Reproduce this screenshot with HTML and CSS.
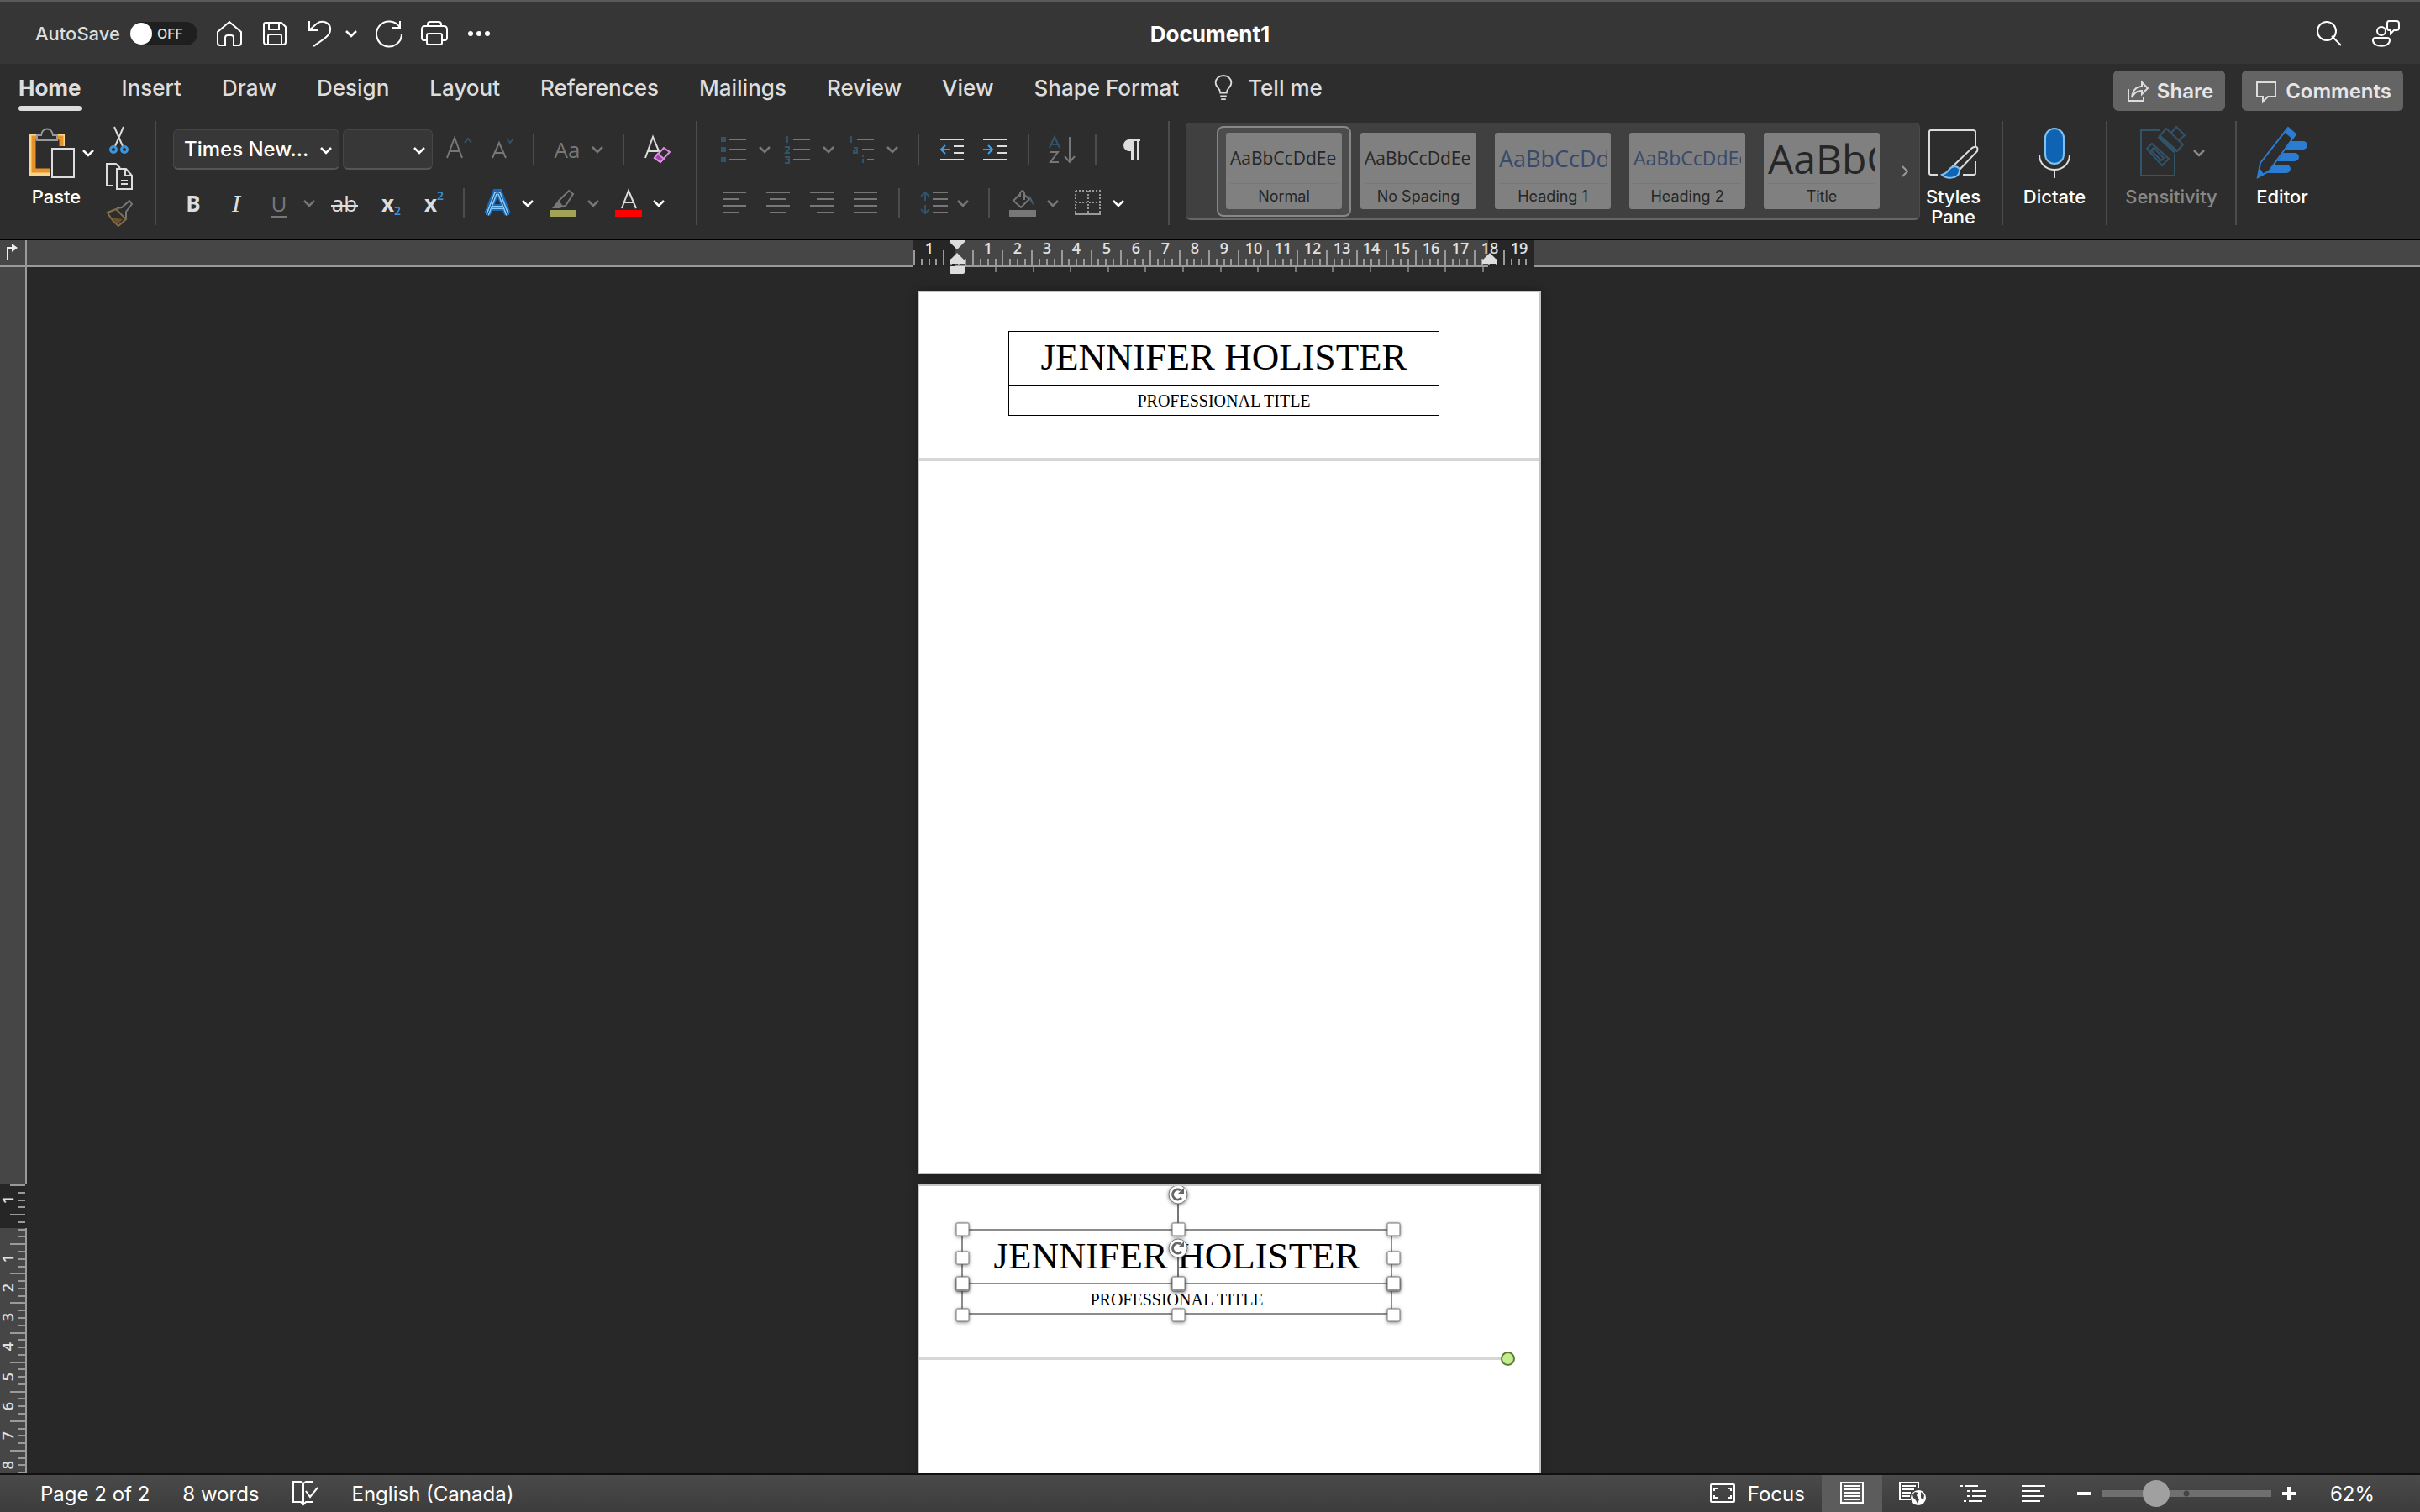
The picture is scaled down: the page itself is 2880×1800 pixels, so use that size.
FILE: index.html
```
<!DOCTYPE html>
<html lang="en">

<head>
    <meta charset="UTF-8">
    <meta name="viewport" content="width=device-width, initial-scale=1.0">
    <title>Document1</title>
    <link rel="stylesheet" href="styles.css">
</head>

<body>
    <svg class="defs" aria-hidden="true">
        <symbol id="chevron" viewBox="0 0 14 14">
            <path d="M1 4 L7 10 L13 4" fill="none" stroke="currentColor" stroke-width="2.5" />
        </symbol>
    </svg>

    <header class="titlebar">
        <div class="quick">
            <label class="autosave">
                AutoSave
                <input type="checkbox" class="autosave-input">
                <span class="switch"><span class="knob"></span>OFF</span>
            </label>
            <button class="qbtn" aria-label="Home">
                <svg class="i32" viewBox="0 0 32 32"><path d="M2 14 L16 2 L30 14 V27 Q30 30 27 30 H21 V21 Q21 18 18 18 H14 Q11 18 11 21 V30 H5 Q2 30 2 27 Z" /></svg>
            </button>
            <button class="qbtn" aria-label="Save">
                <svg class="i32" viewBox="0 0 32 32"><path d="M5 3 H24 L29 8 V26 Q29 29 26 29 H6 Q3 29 3 26 V5 Q3 3 5 3 Z M9 3 V11 H21 V3 M8 29 V19 Q8 17 10 17 H22 Q24 17 24 19 V29" /></svg>
            </button>
            <div class="undo">
                <button class="qbtn" aria-label="Undo">
                    <svg class="i32" viewBox="0 0 32 32"><path d="M3 1 V12 H14 M3 12 L12 4 C19 -1 29 3 28 12 C28 18 20 23 8 31" /></svg>
                </button>
                <button aria-label="Undo list"><svg class="chev"><use href="#chevron" /></svg></button>
            </div>
            <button class="qbtn" aria-label="Redo">
                <svg class="i32" viewBox="0 0 32 32"><path d="M29 1 V9 H20 M29 9 A15 15 0 1 0 31 16" /></svg>
            </button>
            <button class="qbtn" aria-label="Print">
                <svg class="i32" viewBox="0 0 32 32"><path d="M8 7 V5 Q8 2 11 2 H21 Q24 2 24 5 V7 M7 24 H4 Q1 24 1 21 V11 Q1 7 5 7 H27 Q31 7 31 11 V21 Q31 24 28 24 H25 M9 16 H23 Q25 16 25 18 V27 Q25 29 23 29 H9 Q7 29 7 27 V18 Q7 16 9 16 Z" /></svg>
            </button>
            <button class="qbtn" aria-label="More">
                <svg class="i32" viewBox="0 0 32 32"><g fill="#fff" stroke="none"><circle cx="5" cy="16" r="3" /><circle cx="15" cy="16" r="3" /><circle cx="25" cy="16" r="3" /></g></svg>
            </button>
        </div>
        <h1 class="doc-title">Document1</h1>
        <div class="title-right">
            <button class="qbtn" aria-label="Search">
                <svg class="i32" viewBox="0 0 32 32"><path d="M19 19 L30 30" /><circle cx="13" cy="13" r="11" /></svg>
            </button>
            <button class="qbtn" aria-label="Presence">
                <svg class="i32" viewBox="0 0 32 32"><circle cx="10" cy="13" r="5" /><path d="M3 21 H17 Q20 21 20 24 C20 33 0 33 0 24 Q0 21 3 21 Z M19 1 H28 Q31 1 31 4 V9 Q31 12 28 12 H25 L21 16 V12 H19 Q17 12 17 9 V4 Q17 1 19 1 Z" /></svg>
            </button>
        </div>
    </header>

    <nav class="tabs">
        <button class="tab active">Home</button>
        <button class="tab">Insert</button>
        <button class="tab">Draw</button>
        <button class="tab">Design</button>
        <button class="tab">Layout</button>
        <button class="tab">References</button>
        <button class="tab">Mailings</button>
        <button class="tab">Review</button>
        <button class="tab">View</button>
        <button class="tab">Shape Format</button>
        <button class="tab tell">
            <svg class="bulb" viewBox="0 0 24 32"><path d="M8 23 C8 17 2 16 2 10 A10 9 0 0 1 22 10 C22 16 16 17 16 23 Z M8 27 H16 M9 31 H15" /></svg>
            Tell me
        </button>
        <div class="tab-actions">
            <button class="pill">
                <svg viewBox="0 0 26 26"><path d="M2 10 V24 H20 V19 M6 20 C7 12 11 7 18 7 V2 L25 9 L18 16 V12 C13 12 9 14 6 20 Z" /></svg>
                Share
            </button>
            <button class="pill">
                <svg viewBox="0 0 26 26"><path d="M2 2 H24 V19 H15 L9 25 V19 H2 Z" /></svg>
                Comments
            </button>
        </div>
    </nav>

    <section class="ribbon">
        <div class="group clipboard">
            <button class="big paste">
                <span class="big-icon">
                    <svg width="54" height="60" viewBox="0 0 54 60">
                        <path d="M40 22 V10 H2 V55 H24" fill="none" stroke="#fbd58c" stroke-width="4" />
                        <path d="M38 22 V12 H5 V51 H24" fill="none" stroke="#e8922a" stroke-width="5" />
                        <path d="M9 15 V9 H14 C15 -1 27 -1 28 9 H33 V15 Z" fill="#2d2d2d" stroke="#999" stroke-width="2" />
                        <rect x="27" y="25" width="26" height="34" fill="#2d2d2d" stroke="#ddd" stroke-width="2" />
                    </svg>
                    <svg class="chev"><use href="#chevron" /></svg>
                </span>
                Paste
            </button>
            <div class="clip-tools">
                <button aria-label="Cut">
                    <svg class="i32" viewBox="0 0 32 32"><path d="M10 1 L20 24 M21 1 L11 24" stroke="#ddd" /><g stroke="#3b96dd" stroke-width="3"><circle cx="9" cy="28" r="3.5" /><circle cx="22" cy="28" r="3.5" /></g></svg>
                </button>
                <button aria-label="Copy">
                    <svg class="i32" viewBox="0 0 32 32"><path d="M9 27 H1 V1 H12 L17 6 M13 7 H24 L31 15 V31 H13 Z M23 7 V15 H31 M18 21 H26 M18 25 H26" stroke="#ddd" /></svg>
                </button>
                <button aria-label="Format painter" disabled>
                    <svg class="i32" viewBox="0 0 32 32"><path d="M2 15 L12 11 L24 23 L15 31 C10 27 5 21 2 15 Z" stroke="#7f7145" /><path d="M7 21 L20 23 L14 29 Z" fill="#6f5130" stroke="none" /><path d="M13 10 L19 9 L28 1 L31 5 L24 14 L24 22" stroke="#777" /></svg>
                </button>
            </div>
        </div>
        <div class="divider"></div>

        <div class="group rows font-group">
            <div class="row row-top">
                <div class="fonts">
                    <div class="selects">
                        <span class="select-box name-box">
                            <select aria-label="Font"><option>Times New...</option></select>
                            <svg class="chev"><use href="#chevron" /></svg>
                        </span>
                        <span class="select-box size-box">
                            <select aria-label="Font size"><option></option></select>
                            <svg class="chev"><use href="#chevron" /></svg>
                        </span>
                    </div>
                    <button class="off" aria-label="Grow font">
                        <svg class="i32" viewBox="0 0 32 32"><path d="M1 26 L10 2 L19 26 M4 18 H16" /><path d="M22 8 L26 3 L30 8" stroke="#31546b" /></svg>
                    </button>
                    <button class="off" aria-label="Shrink font">
                        <svg class="i32" viewBox="0 0 32 32"><path d="M7 26 L15 8 L23 26 M10 20 H20" /><path d="M24 3 L28 8 L32 3" stroke="#31546b" /></svg>
                    </button>
                </div>
                <i class="sep"></i>
                <div class="split off">
                    <button class="case" aria-label="Change case">Aa</button>
                    <button aria-label="Case list"><svg class="chev"><use href="#chevron" /></svg></button>
                </div>
                <i class="sep"></i>
                <button aria-label="Clear formatting">
                    <svg class="i32" viewBox="0 0 32 32"><path d="M2 26 L11 1 L19 20 M5 18 H17" /><path d="M13 26 L24 14 L31 19 L20 31 Z" stroke="#d98fe0" /><path d="M13 26 L17 21 L24 27 L20 31 Z" fill="#a03fae" stroke="#d98fe0" /></svg>
                </button>
            </div>
            <div class="row row-bottom">
                <button class="glyph"><b>B</b></button>
                <button class="glyph italic">I</button>
                <div class="split off">
                    <button class="glyph under">U</button>
                    <button aria-label="Underline list"><svg class="chev"><use href="#chevron" /></svg></button>
                </div>
                <button class="glyph strike">ab</button>
                <button class="glyph script"><b>x</b><sub>2</sub></button>
                <button class="glyph script"><b>x</b><sup>2</sup></button>
                <i class="sep"></i>
                <div class="split">
                    <button aria-label="Text effects">
                        <svg class="i32" viewBox="0 0 32 32"><path d="M4 29 L14 3 H18 L28 29 M9 21 H23" stroke="#1569b8" stroke-width="8" /><path d="M4 30 L14 4 H18 L28 30 M9 21 H23" stroke="#8cc8f5" stroke-width="4" /><path d="M4 30 L14 4 H18 L28 30 M9 21 H23" stroke="#164a7c" stroke-width="1" /></svg>
                    </button>
                    <button aria-label="Effects list"><svg class="chev"><use href="#chevron" /></svg></button>
                </div>
                <div class="split off">
                    <button aria-label="Highlight">
                        <svg class="i32" viewBox="0 0 32 32"><path d="M11 13 L23 1 L28 5 L19 19 L14 20 Z" /><path d="M10 13 L17 20 L12 22 H3 Z" fill="#777" stroke="none" /><rect x="0" y="24" width="32" height="8" fill="#a2a356" stroke="none" /></svg>
                    </button>
                    <button aria-label="Highlight list"><svg class="chev"><use href="#chevron" /></svg></button>
                </div>
                <div class="split">
                    <button aria-label="Font color">
                        <svg class="i32" viewBox="0 0 32 32"><path d="M8 22 L16 1 L25 22 M11 15 H22" /><rect x="0" y="24" width="32" height="8" fill="#f00" stroke="none" /></svg>
                    </button>
                    <button aria-label="Color list"><svg class="chev"><use href="#chevron" /></svg></button>
                </div>
            </div>
        </div>
        <div class="divider"></div>

        <div class="group rows para-group">
            <div class="row row-top">
                <div class="lists">
                    <div class="split off">
                        <button aria-label="Bullets">
                            <svg class="i32" viewBox="0 0 32 32"><path d="M0 4 H6 M0 16 H6 M0 28 H6" stroke="#31546b" stroke-width="6" /><path d="M10 4 H30 M10 16 H30 M10 28 H30" /></svg>
                        </button>
                        <button aria-label="Bullet list"><svg class="chev"><use href="#chevron" /></svg></button>
                    </div>
                    <div class="split off">
                        <button aria-label="Numbering">
                            <svg class="i32" viewBox="0 0 32 32"><path d="M1 2 L3 1 V8 M0 13 H5 V16 L1 20 H6 M0 25 H5 V32 H0 M1 28 H5" stroke="#31546b" /><path d="M10 4 H30 M10 16 H30 M10 28 H30" /></svg>
                        </button>
                        <button aria-label="Number list"><svg class="chev"><use href="#chevron" /></svg></button>
                    </div>
                    <div class="split off">
                        <button aria-label="Multilevel list">
                            <svg class="i32" viewBox="0 0 32 32"><path d="M1 2 L3 1 V8 M6 14 H10 V20 H6 V17 H10 M17 23 V25 M17 27 V32" stroke="#31546b" /><path d="M10 4 H30 M16 16 H30 M22 28 H30" /></svg>
                        </button>
                        <button aria-label="Level list"><svg class="chev"><use href="#chevron" /></svg></button>
                    </div>
                </div>
                <i class="sep"></i>
                <button aria-label="Decrease indent">
                    <svg class="i32" viewBox="0 0 32 32"><path d="M2 4 H30 M18 12 H30 M18 20 H30 M2 28 H30" /><path d="M14 16 H3 M8 11 L3 16 L8 21" stroke="#3b9fe8" /></svg>
                </button>
                <button aria-label="Increase indent">
                    <svg class="i32" viewBox="0 0 32 32"><path d="M2 4 H30 M18 12 H30 M18 20 H30 M2 28 H30" /><path d="M2 16 H13 M8 11 L13 16 L8 21" stroke="#3b9fe8" /></svg>
                </button>
                <i class="sep"></i>
                <button class="off" aria-label="Sort">
                    <svg class="i32" viewBox="0 0 32 32"><path d="M1 14 L7 1 L13 14 M3 10 H11" stroke="#31546b" /><path d="M2 19 H11 L2 31 H12 M25 1 V31 M19 24 L25 31 L31 24" /></svg>
                </button>
                <i class="sep"></i>
                <button aria-label="Show marks">
                    <svg class="i32" viewBox="0 0 32 32"><path d="M29 5 H17 A6 6 0 0 0 17 17 H19 V29 M20 5 V29 M26 5 V29" /><path d="M19 5 H16 A6 6 0 0 0 16 17 H19 Z" fill="#ddd" /></svg>
                </button>
            </div>
            <div class="row row-bottom">
                <div class="aligns off">
                    <button aria-label="Align left"><svg class="i32" viewBox="0 0 32 32"><path d="M2 3 H30 M2 11 H22 M2 19 H30 M2 27 H22" /></svg></button>
                    <button aria-label="Center"><svg class="i32" viewBox="0 0 32 32"><path d="M2 3 H30 M6 11 H26 M2 19 H30 M6 27 H26" /></svg></button>
                    <button aria-label="Align right"><svg class="i32" viewBox="0 0 32 32"><path d="M2 3 H30 M10 11 H30 M2 19 H30 M10 27 H30" /></svg></button>
                    <button aria-label="Justify"><svg class="i32" viewBox="0 0 32 32"><path d="M2 3 H30 M2 11 H30 M2 19 H30 M2 27 H30" /></svg></button>
                </div>
                <i class="sep"></i>
                <div class="split off">
                    <button aria-label="Line spacing">
                        <svg class="i32" viewBox="0 0 32 32"><path d="M16 3 H34 M16 11 H34 M16 19 H34 M16 27 H34" /><path d="M7 13 V3 M2 8 L7 3 L12 8 M7 18 V28 M2 23 L7 28 L12 23" stroke="#31546b" /></svg>
                    </button>
                    <button aria-label="Spacing list"><svg class="chev"><use href="#chevron" /></svg></button>
                </div>
                <i class="sep"></i>
                <div class="split off">
                    <button aria-label="Shading">
                        <svg class="i32" viewBox="0 0 32 32"><path d="M13 5 L5 13 L14 21 L24 11 L18 6 V12 M13 9 V4 Q16 -2 18 4 V8" /><path d="M23 7 Q28 9 29 19 L25 13 Z" fill="#4a5a78" stroke="none" /><rect x="0" y="24" width="32" height="8" fill="#777" stroke="none" /></svg>
                    </button>
                    <button aria-label="Shading list"><svg class="chev"><use href="#chevron" /></svg></button>
                </div>
                <div class="split">
                    <button aria-label="Borders">
                        <svg class="i32" viewBox="0 0 32 32"><path d="M1 1 H31 M1 15 H31 M1 1 V27 M16 1 V27 M30 1 V27" stroke="#999" stroke-dasharray="2 2" /><path d="M0 29 H31" stroke="#999" /></svg>
                    </button>
                    <button aria-label="Border list"><svg class="chev"><use href="#chevron" /></svg></button>
                </div>
            </div>
        </div>
        <div class="divider"></div>

        <div class="gallery">
            <div class="cards">
                <button class="card selected"><span class="inner"><span class="preview">AaBbCcDdEe</span><span class="card-name">Normal</span></span></button>
                <button class="card"><span class="inner"><span class="preview">AaBbCcDdEe</span><span class="card-name">No Spacing</span></span></button>
                <button class="card"><span class="inner"><span class="preview h1">AaBbCcDd</span><span class="card-name">Heading 1</span></span></button>
                <button class="card"><span class="inner"><span class="preview h2">AaBbCcDdEe</span><span class="card-name">Heading 2</span></span></button>
                <button class="card"><span class="inner"><span class="preview title">AaBbC</span><span class="card-name">Title</span></span></button>
            </div>
            <button class="more" aria-label="More styles"><svg class="chev" viewBox="0 0 14 14"><path d="M4 1 L10 7 L4 13" fill="none" stroke="#999" stroke-width="2" /></svg></button>
        </div>

        <button class="big styles-pane">
            <span class="big-icon">
                <svg width="62" height="64" viewBox="0 0 62 64">
                    <path d="M12 58 H4 Q2 58 2 56 V7 Q2 5 4 5 H54 Q57 5 57 7 V24 M57 42 V56 Q57 58 55 58 H42" fill="none" stroke="#ddd" stroke-width="2" />
                    <path d="M30 48 L53 26 Q61 22 59 30 L38 52 Z" fill="#2d2d2d" stroke="#ddd" stroke-width="2" />
                    <path d="M17 58 C26 56 24 49 32 48 Q39 49 38 54 C36 64 22 63 17 58 Z" fill="#0f63b5" stroke="#7fc0f0" stroke-width="2" />
                </svg>
            </span>
            Styles<br>Pane
        </button>
        <div class="divider"></div>
        <button class="big dictate">
            <span class="big-icon">
                <svg width="40" height="64" viewBox="0 0 40 64">
                    <path d="M2 34 C2 58 38 58 38 34 M20 52 V62" fill="none" stroke="#ddd" stroke-width="2" />
                    <rect x="9" y="3" width="22" height="42" rx="11" fill="#0f63b5" stroke="#7fc0f0" stroke-width="2" />
                </svg>
            </span>
            Dictate
        </button>
        <div class="divider"></div>
        <button class="big sensitivity" disabled>
            <span class="big-icon">
                <svg width="56" height="64" viewBox="0 0 56 64">
                    <g fill="none" stroke="#31546b" stroke-width="2">
                        <path d="M26 5 H3 V59 H43 V33" />
                        <path d="M10 27 L16 21 L36 39 L28 47 Z M15 29 L18 26 L30 38 L27 41 Z" />
                        <path d="M25 12 L33 3 L53 22 L46 30 Z M39 8 L45 1 L55 11 L48 17" />
                        <path d="M26 12 L45 29 L42 31 L24 14 Z" fill="#31546b" />
                    </g>
                </svg>
                <svg class="chev"><use href="#chevron" /></svg>
            </span>
            Sensitivity
        </button>
        <div class="divider"></div>
        <button class="big editor">
            <span class="big-icon">
                <svg width="62" height="64" viewBox="0 0 62 64">
                    <path d="M42 18 H56 A5 5 0 0 1 56 28 H35 Z M32 32 H46 A5 5 0 0 1 46 42 H25 Z M22 46 H36 A5 5 0 0 1 36 56 H12 Z" fill="#2b7cd3" />
                    <path d="M5 44 L38 2 L47 10 L15 54 L2 61 Z" fill="#2d2d2d" stroke="#2b7cd3" stroke-width="2" />
                    <path d="M38 2 L47 10 L43 15 L34 7 Z M5 52 L9 58 L1 62 Z" fill="#2b7cd3" stroke="#2b7cd3" />
                </svg>
            </span>
            Editor
        </button>
    </section>

    <div class="ruler-bar">
        <div class="corner">
            <svg width="32" height="32" viewBox="0 0 32 32"><path d="M9 24 V9 H15" fill="none" stroke="#eee" stroke-width="2" /><path d="M14 4 L21 9 L14 14 Z" fill="#eee" /></svg>
        </div>
        <div class="ruler-track">
            <svg id="ruler-h" width="752" height="32"></svg>
        </div>
    </div>

    <main class="workspace">
        <div class="side-ruler">
            <svg id="ruler-v" width="32" height="344"></svg>
        </div>
        <div class="canvas">
            <article class="page">
                <div class="letterhead">
                    <div class="name">JENNIFER HOLISTER</div>
                    <div class="job">PROFESSIONAL TITLE</div>
                </div>
                <hr class="rule">
            </article>
            <article class="page second">
                <div class="letterhead picked">
                    <div class="name">JENNIFER HOLISTER</div>
                    <div class="job">PROFESSIONAL TITLE</div>
                    <svg class="handles" id="handles" width="560" height="180" viewBox="-20 -60 560 180"></svg>
                </div>
                <div class="rule-row">
                    <hr class="rule">
                    <span class="end-dot"></span>
                </div>
            </article>
        </div>
    </main>

    <footer class="status">
        <span>Page 2 of 2</span>
        <span>8 words</span>
        <button aria-label="Proofing">
            <svg class="i32" viewBox="0 0 32 32"><path d="M13 28 V4 L10 2 H1 V26 H10 L13 29 L16 26 H24 M13 4 L16 2 H24 M16 13 L21 20 L30 9" /></svg>
        </button>
        <button>English (Canada)</button>
        <div class="view-tools">
            <button class="focus">
                <svg class="i32" viewBox="0 0 32 32"><rect x="2" y="5" width="28" height="21" rx="1" /><path d="M6 13 V10 H10 M22 10 H26 V13 M26 18 V21 H22 M10 21 H6 V18" /></svg>
                Focus
            </button>
            <button class="view current" aria-label="Print layout">
                <svg class="i32" viewBox="0 0 32 32"><path d="M3 3 H29 V27 H3 Z M6 7 H26 M6 11 H26 M6 15 H26 M6 19 H26 M6 23 H26" /></svg>
            </button>
            <button class="view" aria-label="Web layout">
                <svg class="i32" viewBox="0 0 32 32"><path d="M14 23 H1 V3 H23 V10 M4 7 H20 M4 11 H18 M4 15 H14 M4 19 H13" /><circle cx="23" cy="21" r="9" fill="#fff" stroke="none" /><path d="M16 17 L19 14 L23 15 L21 18 L22 20 L24 23 L22 28 L20 24 L17 21 Z M26 14 L30 18 L29 24 L26 21 Z" fill="#444" stroke="none" /></svg>
            </button>
            <button class="view" aria-label="Outline">
                <svg class="i32" viewBox="0 0 32 32"><path d="M1 7 H4 M7 7 H22 M9 13 H12 M15 13 H31 M9 19 H12 M15 19 H31 M5 25 H8 M11 25 H27" /></svg>
            </button>
            <button class="view" aria-label="Draft">
                <svg class="i32" viewBox="0 0 32 32"><path d="M2 7 H30 M2 13 H24 M2 19 H28 M2 25 H24" /></svg>
            </button>
            <div class="zoom">
                <button aria-label="Zoom out"><svg width="18" height="18" viewBox="0 0 18 18"><path d="M1 9 H17" stroke-width="4" /></svg></button>
                <input type="range" min="10" max="500" value="152" aria-label="Zoom">
                <button aria-label="Zoom in"><svg width="18" height="18" viewBox="0 0 18 18"><path d="M1 9 H17 M9 1 V17" stroke-width="4" /></svg></button>
            </div>
            <span class="percent">62%</span>
        </div>
    </footer>

    <script>
        const CM = 35.1;

        function tick(x1, y1, x2, y2, color) {
            return `<path d="M${Math.round(x1)} ${Math.round(y1)} L${Math.round(x2)} ${Math.round(y2)}" stroke="${color}" stroke-width="2" />`;
        }

        // horizontal ruler, zero mark sits at x = 53
        let h = '<rect x="0" width="738" height="32" fill="#262626" /><rect x="50" width="634" height="32" fill="#464646" />';
        h += '<rect x="50" y="30" width="634" height="2" fill="#9a9a9a" />';
        for (let i = 0; i < 84; i++) {
            let x = 1 + i * CM / 4;
            h += tick(x, i % 4 == 0 ? 12 : 22, x, 30, '#9a9a9a');
        }
        for (let i = 0; i < 14; i++) {
            h += tick(98 + i * 44.6, 32, 98 + i * 44.6, 38, '#777');
        }
        for (let n = -1; n < 20; n++) {
            if (n == 0) continue;
            h += `<text x="${Math.round(54 + n * CM)}" y="16">${Math.abs(n)}</text>`;
        }
        h += '<path d="M43 0 H61 V2 L52 11 L43 2 Z M43 28 V24 L52 15 L61 24 V28 Z M43 31 H61 V38 Q61 40 59 40 H45 Q43 40 43 38 Z" fill="#ddd" />';
        h += '<path d="M677 28 V24 L686 15 L695 24 V28 Z" fill="#ddd" />';
        document.getElementById('ruler-h').innerHTML = h;

        // vertical ruler, starts at the top of the second page
        let v = '<rect width="32" height="52" fill="#262626" />';
        for (let i = 0; i < 40; i++) {
            let y = 1 + i * CM / 4;
            v += tick(i % 4 == 0 ? 12 : 22, y, 30, y, '#9a9a9a');
        }
        for (let n = -1; n < 9; n++) {
            if (n == 0) continue;
            let y = Math.round(53 + n * CM);
            v += `<text transform="translate(16 ${y}) rotate(-90)">${Math.abs(n)}</text>`;
        }
        document.getElementById('ruler-v').innerHTML = v;

        // selection handles of the two text boxes
        let s = '<path class="stem" d="M257 -31 V0 M257 32 V64" />';
        for (let p of [[0, 0], [257, 0], [513, 0], [0, 34], [513, 34], [0, 66], [257, 66], [513, 66], [0, 64], [257, 64], [513, 64], [0, 102], [257, 102], [513, 102]]) {
            s += `<rect class="handle" x="${p[0] - 7}" y="${p[1] - 8}" width="15" height="15" rx="1" />`;
        }
        for (let y of [-42, 22]) {
            s += `<circle class="handle" cx="257" cy="${y}" r="11" />`;
            s += `<path class="turn" d="M260 ${y - 5} A6 6 0 1 0 261 ${y + 4}" />`;
            s += `<path d="M264 ${y - 8} V${y - 1} H257 Z" fill="#666" />`;
        }
        document.getElementById('handles').innerHTML = s;
    </script>
</body>

</html>
```
FILE: styles.css
```
* {
    margin: 0;
    padding: 0;
    box-sizing: border-box;
}

html,
body {
    height: 100%;
}

body {
    display: flex;
    flex-direction: column;
    overflow: hidden;
    background-color: #282828;
    color: #fff;
    font-family: Inter, "Liberation Sans", sans-serif;
    font-size: 22px;
}

button,
select {
    background: none;
    border: none;
    color: inherit;
    font: inherit;
}

button {
    display: flex;
    align-items: center;
    justify-content: center;
}

svg {
    display: block;
    flex: none;
    overflow: visible;
}

.defs {
    position: absolute;
    width: 0;
    height: 0;
}

.i32 {
    width: 32px;
    height: 32px;
    fill: none;
    stroke: #ddd;
    stroke-width: 2;
}

.chev {
    width: 14px;
    height: 14px;
}

.off {
    color: #777;
}

.off .i32 {
    stroke: #777;
}

/* title bar */
.titlebar {
    display: grid;
    grid-template-columns: 1fr auto 1fr;
    align-items: center;
    height: 76px;
    flex: none;
    padding: 2px 24px 0;
    background-color: #363636;
    border-top: 2px solid #5a5a5a;
}

.quick {
    display: flex;
    align-items: center;
    gap: 22px;
    padding-left: 18px;
}

.titlebar .i32 {
    stroke: #fff;
}

.autosave {
    display: flex;
    align-items: center;
    gap: 12px;
    color: #ddd;
    font-weight: 500;
}

.autosave-input {
    position: absolute;
    opacity: 0;
}

.switch {
    display: flex;
    align-items: center;
    gap: 6px;
    width: 80px;
    height: 28px;
    border-radius: 14px;
    background-color: #1f1f1f;
    font-size: 16px;
}

.knob {
    width: 26px;
    height: 26px;
    border-radius: 50%;
    background-color: #fff;
}

.undo {
    display: flex;
    align-items: center;
    gap: 14px;
}

.doc-title {
    font-size: 26px;
    font-weight: 700;
}

.title-right {
    display: flex;
    justify-content: flex-end;
    gap: 36px;
}

/* tabs */
.tabs {
    display: flex;
    align-items: flex-start;
    gap: 48px;
    height: 68px;
    flex: none;
    padding: 8px 20px 0 22px;
    background-color: #2d2d2d;
    color: #ddd;
    font-size: 26px;
    font-weight: 500;
}

.tab {
    position: relative;
    height: 48px;
    padding-bottom: 8px;
    white-space: nowrap;
}

.tab.active {
    font-weight: 700;
}

.tab.active::after {
    content: "";
    position: absolute;
    left: 0;
    right: 0;
    bottom: 0;
    height: 6px;
    border-radius: 3px;
    background-color: #ddd;
}

.tell {
    gap: 16px;
    margin-left: -8px;
}

.bulb,
.pill svg {
    width: 26px;
    height: 30px;
    fill: none;
    stroke: #ddd;
    stroke-width: 2;
}

.tab-actions {
    display: flex;
    gap: 20px;
    margin-left: auto;
}

.pill {
    gap: 10px;
    height: 48px;
    padding: 0 14px 0 16px;
    border-radius: 6px;
    background-color: #646464;
    border-top: 1px solid #7a7a7a;
    color: #e6e6e6;
    font-size: 24px;
    font-weight: 600;
}

/* ribbon */
.ribbon {
    display: flex;
    height: 142px;
    flex: none;
    background-color: #2d2d2d;
    border-bottom: 2px solid #000;
}

.divider {
    width: 2px;
    height: 124px;
    flex: none;
    background-color: #4c4c4c;
}

.clipboard {
    display: flex;
    gap: 14px;
    padding: 0 26px 0 22px;
}

.big {
    flex-direction: column;
    justify-content: flex-start;
    flex: none;
    height: 130px;
    padding-top: 6px;
    line-height: 24px;
    font-weight: 500;
}

.big-icon {
    display: flex;
    align-items: center;
    height: 64px;
    margin-bottom: 8px;
    gap: 9px;
}

.paste {
    width: 90px;
}

.paste .big-icon {
    padding-left: 12px;
}

.styles-pane {
    width: 97px;
    padding-right: 18px;
}

.dictate {
    width: 122px;
}

.sensitivity {
    width: 152px;
    color: #888;
}

.editor {
    width: 108px;
    margin-right: 110px;
}

.clip-tools {
    display: flex;
    flex-direction: column;
    gap: 12px;
    padding-top: 6px;
}

.rows {
    padding: 10px 30px 0 28px;
}

.font-group {
    padding-left: 20px;
}

.row {
    display: flex;
    align-items: center;
    gap: 19px;
}

.row-top {
    height: 48px;
}

.row-bottom {
    height: 36px;
    margin-top: 22px;
}

.font-group .row-bottom {
    padding-left: 8px;
}

.sep {
    width: 2px;
    height: 36px;
    margin: 0 4px;
    background-color: #4c4c4c;
}

.fonts {
    display: flex;
    align-items: center;
    gap: 16px;
}

.selects {
    display: flex;
    gap: 4px;
}

.select-box {
    position: relative;
    height: 48px;
    border: 1px solid #464646;
    border-bottom: 2px solid #555;
    border-radius: 6px;
    background-color: #373737;
    font-size: 24px;
    font-weight: 500;
}

.select-box select {
    width: 100%;
    height: 100%;
    padding-left: 12px;
    appearance: none;
}

.select-box .chev {
    position: absolute;
    right: 8px;
    top: 17px;
    pointer-events: none;
}

.name-box {
    width: 198px;
}

.size-box {
    width: 107px;
}

.split {
    display: flex;
    align-items: center;
    gap: 13px;
}

.lists {
    display: flex;
    gap: 17px;
}

.aligns {
    display: flex;
    gap: 20px;
}

.glyph,
.case {
    width: 32px;
    height: 32px;
    color: #ddd;
    font-family: "Open Sans", sans-serif;
    font-size: 26px;
    line-height: 32px;
}

.off .case,
.off .glyph {
    color: #777;
}

.glyph.italic {
    font-family: "Liberation Serif", serif;
    font-style: italic;
    font-size: 30px;
}

.glyph.under {
    text-decoration: underline;
    text-decoration-thickness: 2px;
    text-underline-offset: 5px;
}

.glyph.strike {
    background: linear-gradient(#ddd, #ddd) center 18px / 32px 2px no-repeat;
}

.script {
    justify-content: flex-end;
}

.script sub,
.script sup {
    color: #3b96dd;
    font-size: 14px;
    font-weight: 600;
    line-height: 14px;
}

.script sub {
    align-self: flex-end;
}

.script sup {
    align-self: flex-start;
}

/* style gallery */
.gallery {
    display: flex;
    flex: 1;
    align-items: center;
    justify-content: space-between;
    height: 116px;
    margin: 2px 0 0 19px;
    padding-left: 36px;
    border: 1px solid #4c4c4c;
    border-bottom: 2px solid #666;
    border-radius: 6px;
    background-color: #404040;
}

.cards {
    display: flex;
}

.card {
    width: 160px;
    height: 108px;
    border: 2px solid transparent;
    border-radius: 8px;
}

.card.selected {
    border-color: #888;
    background-color: #4c4c4c;
}

.inner {
    display: block;
    width: 138px;
    height: 91px;
    border-radius: 3px;
    background-color: #808080;
    color: #262626;
}

.preview {
    display: flex;
    align-items: center;
    height: 61px;
    margin: 0 5px;
    overflow: hidden;
    font-family: "Open Sans", sans-serif;
    font-size: 21px;
    border-bottom: 1px solid #777;
}

.preview.h1 {
    color: #3a4a6b;
    font-size: 27px;
}

.preview.h2 {
    color: #3a4a6b;
    font-size: 23px;
}

.preview.title {
    font-size: 48px;
}

.card-name {
    display: block;
    font-size: 18px;
    line-height: 30px;
    text-align: center;
}

.more {
    margin-right: 10px;
}

/* rulers */
.ruler-bar {
    display: flex;
    position: relative;
    z-index: 1;
    flex: none;
    height: 32px;
    background-color: #464646;
    box-shadow: inset 0 -2px #9a9a9a;
}

.corner {
    width: 32px;
    border-right: 2px solid #9a9a9a;
}

.ruler-track {
    display: flex;
    flex: 1;
    justify-content: center;
    padding-left: 14px;
}

.ruler-bar text,
.side-ruler text {
    fill: #e0e0e0;
    font-family: "Open Sans", sans-serif;
    font-size: 18px;
    font-weight: 600;
    text-anchor: middle;
}

.workspace {
    display: flex;
    flex: 1;
    min-height: 0;
    overflow: hidden;
}

.side-ruler {
    width: 32px;
    padding-top: 1092px;
    background-color: #464646;
    border-right: 2px solid #9a9a9a;
}

.canvas {
    display: flex;
    flex: 1;
    flex-direction: column;
    align-items: center;
    gap: 12px;
    padding: 28px 0 0 14px;
}

/* pages */
.page {
    width: 742px;
    height: 1052px;
    flex: none;
    overflow: hidden;
    border: 2px solid #c4c4c4;
    background-color: #fff;
    color: #000;
    box-shadow: 0 0 12px rgba(0, 0, 0, 0.3);
}

.letterhead {
    display: grid;
    grid-template-rows: 64px 35px;
    position: relative;
    width: 513px;
    margin: 46px 0 50px 106px;
    border: 1px solid #000;
    font-family: "Liberation Serif", serif;
    text-align: center;
}

.name {
    font-size: 45px;
    line-height: 60px;
    border-bottom: 1px solid #000;
}

.job {
    font-size: 20px;
    line-height: 36px;
}

.letterhead.picked {
    grid-template-rows: 64px 34px;
    margin: 51px 0 50px 50px;
    border: 2px solid #8c8c8c;
}

.picked .name {
    border-bottom: 2px solid #8c8c8c;
}

.handles {
    position: absolute;
    left: -21px;
    top: -61px;
}

.handle {
    fill: #fff;
    stroke: #777;
    stroke-width: 1;
    filter: drop-shadow(0 1px 2px rgba(0, 0, 0, 0.5));
}

.stem {
    stroke: #777;
    stroke-width: 2;
}

.turn {
    fill: none;
    stroke: #666;
    stroke-width: 3;
}

.rule {
    height: 4px;
    flex: 1;
    border: none;
    background-color: #d6d6d6;
}

.rule-row {
    display: flex;
    align-items: center;
    padding-right: 29px;
    height: 4px;
}

.end-dot {
    width: 17px;
    height: 17px;
    border: 2px solid #5f7a3c;
    border-radius: 50%;
    background-color: #c4ee8c;
}

/* status bar */
.status {
    display: flex;
    align-items: center;
    gap: 39px;
    height: 46px;
    flex: none;
    padding: 0 54px 0 48px;
    border-top: 2px solid #111;
    background: linear-gradient(#4a4a4a, #3c3c3c);
    font-size: 24px;
}

.status svg {
    stroke: #fff;
}

.view-tools {
    display: flex;
    align-items: center;
    height: 100%;
    margin-left: auto;
}

.focus {
    gap: 14px;
    margin-right: 20px;
}

.view {
    width: 72px;
    height: 100%;
}

.view .i32 {
    stroke-width: 2;
}

.view.current {
    background-color: #5c5c5c;
}

.zoom {
    display: flex;
    align-items: center;
    gap: 12px;
    margin: 0 40px 0 15px;
}

.zoom input {
    width: 202px;
    height: 32px;
    appearance: none;
    background: radial-gradient(circle at 50% 50%, #444 3px, transparent 4px), linear-gradient(#707070, #707070) center / 100% 8px no-repeat;
    border-radius: 4px;
}

.zoom input::-webkit-slider-thumb {
    appearance: none;
    width: 32px;
    height: 32px;
    border-radius: 50%;
    background-color: #a0a0a0;
}
```
